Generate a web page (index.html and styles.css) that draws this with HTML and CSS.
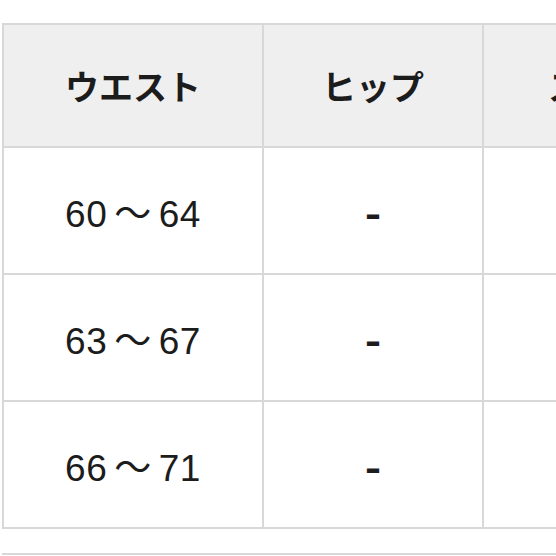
FILE: index.html
```html
<!DOCTYPE html>
<html lang="ja">
<head>
<meta charset="utf-8">
<link rel="stylesheet" href="styles.css">
</head>
<body>
<div class="page">
  <table class="size-table">
    <colgroup>
      <col class="c1">
      <col class="c2">
      <col class="c3">
    </colgroup>
    <thead>
      <tr class="head-row">
        <th>ウエスト</th>
        <th>ヒップ</th>
        <th>スカート丈</th>
      </tr>
    </thead>
    <tbody>
      <tr class="body-row">
        <td>60<span class="tilde">～</span>64</td>
        <td><span class="dash">-</span></td>
        <td></td>
      </tr>
      <tr class="body-row">
        <td>63<span class="tilde">～</span>67</td>
        <td><span class="dash">-</span></td>
        <td></td>
      </tr>
      <tr class="body-row">
        <td>66<span class="tilde">～</span>71</td>
        <td><span class="dash">-</span></td>
        <td></td>
      </tr>
    </tbody>
  </table>
  <div class="next-block"></div>
</div>
</body>
</html>
```
FILE: styles.css
```css
html, body {
  margin: 0;
  padding: 0;
  overflow: hidden;
  background: #ffffff;
}

.page {
  width: 900px;
  padding-top: 23px;
  padding-left: 2px;
  font-family: "Liberation Sans", "Noto Sans CJK JP", sans-serif;
  color: #1c1c1c;
}

.size-table {
  border-collapse: collapse;
  table-layout: fixed;
  width: 780px;
}

.c1 { width: 260px; }
.c2 { width: 220px; }
.c3 { width: 300px; }

.size-table th,
.size-table td {
  border: 2px solid #d8d8d8;
  padding: 0;
  text-align: center;
  vertical-align: middle;
}

.head-row { height: 123px; }
.body-row { height: 127px; }

.size-table th {
  background: #efefef;
  font-size: 34px;
  font-weight: 700;
}

.size-table td {
  font-size: 37px;
  font-weight: 400;
  letter-spacing: 0.5px;
}

.tilde {
  display: inline-block;
  margin: 0 7px;
  font-weight: 400;
}

.dash {
  display: inline-block;
  font-weight: 700;
  transform: translateY(3px) scaleX(1.3);
}

.next-block {
  margin-top: 24px;
  border-top: 2px solid #d8d8d8;
  height: 20px;
}
```
